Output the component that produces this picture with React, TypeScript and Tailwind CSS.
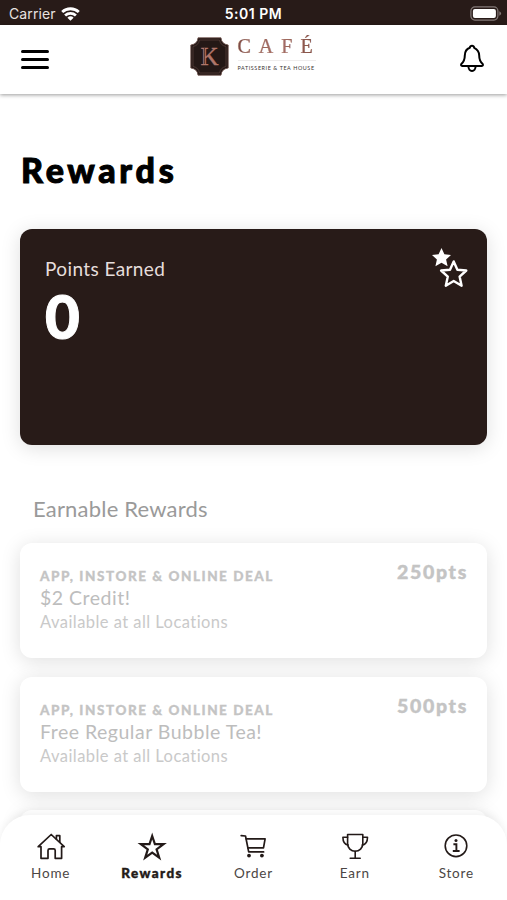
import React from "react"

type Reward = {
  id: string
  kind: string
  title: string
  location: string
  points: string
}

const rewards: Reward[] = [
  {
    id: "credit",
    kind: "APP, INSTORE & ONLINE DEAL",
    title: "$2 Credit!",
    location: "Available at all Locations",
    points: "250pts",
  },
  {
    id: "bubble-tea",
    kind: "APP, INSTORE & ONLINE DEAL",
    title: "Free Regular Bubble Tea!",
    location: "Available at all Locations",
    points: "500pts",
  },
]

const navItems = [
  { id: "home", label: "Home", icon: HomeIcon },
  { id: "rewards", label: "Rewards", icon: StarIcon },
  { id: "order", label: "Order", icon: CartIcon },
  { id: "earn", label: "Earn", icon: TrophyIcon },
  { id: "store", label: "Store", icon: InfoIcon },
]

function HomeIcon() {
  return (
    <svg width="30" height="30" viewBox="0 0 30 30" fill="none" stroke="#231a18" strokeWidth="1.7" strokeLinejoin="round" strokeLinecap="round">
      <path d="M5 27.300V15.700H2.200L15.200 3.500l13 12.200h-2.600v11.600h-6.400v-7.800q0-1.600-1.600-1.600h-4q-1.600 0-1.600 1.600v7.800z" />
      <path d="M20.400 8V4.700h3.400v6.500" />
    </svg>
  )
}

function StarIcon() {
  return (
    <svg width="30" height="30" viewBox="0 0 30 30" fill="none" stroke="#231a18" strokeWidth="2.2" strokeLinejoin="miter">
      <path d="M15.200 5l2.700 8.100h8.700l-7 5.300 2.600 8.200-7-5-7 5 2.600-8.200-7-5.300h8.700z" />
    </svg>
  )
}

function CartIcon() {
  return (
    <svg width="30" height="30" viewBox="0 0 30 30" fill="none" stroke="#231a18" strokeWidth="1.7" strokeLinejoin="round" strokeLinecap="round">
      <path d="M3.200 4.600l4.300.4 3.200 15.900h14.900" />
      <path d="M8.200 7.800h18.900l-1.600 9H9.900" />
      <circle cx="11" cy="24.600" r="1.900" fill="#231a18" stroke="none" />
      <circle cx="23.900" cy="24.600" r="1.900" fill="#231a18" stroke="none" />
    </svg>
  )
}

function TrophyIcon() {
  return (
    <svg width="30" height="30" viewBox="0 0 30 30" fill="none" stroke="#231a18" strokeWidth="1.6" strokeLinejoin="round" strokeLinecap="round">
      <path d="M7.600 3.500h15.200v9.200a7.600 7.600 0 0 1-15.200 0z" />
      <path d="M7.600 6.300H2.900q0 6.800 5.200 7.800M22.800 6.300h4.700q0 6.800-5.200 7.800" />
      <path d="M15.200 20.400v6.600M10.200 27.200h10" />
    </svg>
  )
}

function InfoIcon() {
  return (
    <svg width="30" height="30" viewBox="0 0 30 30" fill="none" stroke="#231a18" strokeWidth="1.6">
      <circle cx="15" cy="14.800" r="10.800" />
      <circle cx="15" cy="9.600" r="1.500" fill="#231a18" stroke="none" />
      <path d="M12.400 13.200h3V20M11.800 20h6.800" strokeWidth="1.900" />
    </svg>
  )
}

function BellIcon() {
  return (
    <svg width="28" height="30" viewBox="0 0 28 30" fill="none" stroke="#000" strokeWidth="2" strokeLinejoin="round" strokeLinecap="round" className="-mt-[3px]">
      <path d="M14 2.800q-1.800 0-2.200 2C8.300 6 6.900 9 6.800 12.500q0 5.500-3.500 8.500-.8 1.800.9 1.900h19.600q1.700-.1.9-1.900-3.500-3-3.500-8.500-.1-5.500-5-7.700-.4-2-2.200-2z" />
      <path d="M10.400 23.200a3.600 4.800 0 0 0 7.200 0" />
    </svg>
  )
}

function StarsIcon() {
  return (
    <svg width="38" height="42" viewBox="0 0 38 42">
      <path d="M9.500 0l2.900 6.300 6.600.7-4.900 4.500 1.500 6.700-6.100-3.400-6.100 3.400 1.500-6.700L0 7l6.600-.7z" fill="#fff" />
      <path
        d="M21.700 13.400l3.700 8.300 8.900.8-6.700 6.100 2 9.100-7.900-4.700-7.900 4.700 2-9.100-6.700-6.100 8.900-.8z"
        fill="#281b18"
        stroke="#fff"
        strokeWidth="2.400"
        strokeLinejoin="round"
      />
    </svg>
  )
}

function StatusBar() {
  return (
    <div className="flex h-[25px] shrink-0 items-center bg-[#281b18] px-[9px] font-['Inter',sans-serif] text-white">
      <div className="flex flex-1 items-center gap-[5px] pt-[2px]">
        <span className="text-[14px] leading-5 tracking-[0.1px] text-[#e8e2e0]">Carrier</span>
        <svg width="19" height="14" viewBox="0 0 19 14" fill="none" stroke="#fff" strokeWidth="2.8">
          <path d="M1.200 5.100a12 12 0 0 1 16.600 0" />
          <path d="M4.100 8.500a8 8 0 0 1 10.800 0" />
          <path d="M9.500 13.700L6.400 10.700a4.500 4.500 0 0 1 6.200 0z" fill="#fff" stroke="none" />
        </svg>
      </div>
      <span className="pt-[2px] text-[14px] leading-5 font-semibold tracking-[0.5px]">5:01 PM</span>
      <div className="flex flex-1 justify-end pt-px">
        <svg width="32" height="15" viewBox="0 0 32 15" className="mr-[-4px]">
          <rect x=".9" y=".9" width="27" height="13.200" rx="4" fill="none" stroke="#837977" strokeWidth="1.200" />
          <rect x="2.900" y="2.900" width="23" height="9.200" rx="2" fill="#fff" />
          <path d="M29.300 5.200q1.800.7 1.800 2.300t-1.800 2.300z" fill="#837977" />
        </svg>
      </div>
    </div>
  )
}

function Logo() {
  return (
    <div className="-mt-[7px] -ml-[2px] flex items-center gap-[9px]">
      <svg width="39" height="39" viewBox="0 0 39 39">
        <path d="M8 .8h23q.5 6.200 7.200 7.200v23q-6.700 1-7.200 7.200H8Q7.500 32 .8 31V8Q7.500 7 8 .8z" fill="#241816" stroke="#6d4f49" strokeWidth=".8" />
        <path d="M9.500 3h20q1 5.500 6.500 6.500v20q-5.500 1-6.500 6.500h-20Q8.500 30.500 3 29.500v-20Q8.500 8.500 9.500 3z" fill="none" stroke="#5c443e" strokeWidth=".7" />
        <text x="19.500" y="27.500" textAnchor="middle" fontFamily="Liberation Serif, serif" fontSize="25" fill="#b0766a" stroke="#b0766a" strokeWidth=".4">K</text>
        <path d="M14.500 11v16" stroke="#3a211d" strokeWidth=".7" />
      </svg>
      <div className="-mt-[5px] flex w-[78px] flex-col">
        <span className="bg-gradient-to-r from-[#7c4a40] via-[#ad766b] to-[#7c4a40] bg-clip-text font-['Liberation_Serif',serif] text-[20px] leading-[22px] tracking-[8px] whitespace-nowrap text-transparent [-webkit-text-stroke:0.2px_#9a6458]">CAFÉ</span>
        <div className="mt-[3px] h-px w-full bg-[#eeecec]" />
        <span className="mt-[3px] font-['Lato',sans-serif] text-[5.400px] leading-[8px] tracking-[0.600px] whitespace-nowrap text-[#3a3433]">PATISSERIE &amp; TEA HOUSE</span>
      </div>
    </div>
  )
}

function Header() {
  return (
    <header className="relative z-10 flex h-[69px] shrink-0 items-center justify-between bg-white px-[21px] shadow-[0_1px_4px_rgba(0,0,0,0.4)]">
      <button className="flex w-[28px] flex-col gap-[5px]" aria-label="Menu">
        <span className="h-[3px] w-full rounded-full bg-black" />
        <span className="h-[3px] w-full rounded-full bg-black" />
        <span className="h-[3px] w-full rounded-full bg-black" />
      </button>
      <Logo />
      <button aria-label="Notifications">
        <BellIcon />
      </button>
    </header>
  )
}

function RewardCard({ reward }: { reward: Reward }) {
  return (
    <div className="flex h-[115px] shrink-0 justify-between rounded-xl bg-white px-5 shadow-[0_3px_20px_rgba(0,0,0,0.13)]">
      <div className="flex flex-col pt-6 whitespace-nowrap">
        <span className="text-[13.5px] leading-[18px] font-black tracking-[1.55px] text-[#c4c4c4] [-webkit-text-stroke:0.3px_#c4c4c4]">{reward.kind}</span>
        <span className="mt-px text-[19.5px] leading-6 tracking-[0.5px] text-[#bdbdbd]">{reward.title}</span>
        <span className="mt-px text-[16.5px] leading-[22px] tracking-[0.45px] text-[#c9c9c9]">{reward.location}</span>
      </div>
      <span className="-mr-px pt-[17px] text-[19.5px] leading-6 font-black tracking-[1.7px] text-[#c4c4c4] [-webkit-text-stroke:0.4px_#c4c4c4]">{reward.points}</span>
    </div>
  )
}

export default function App() {
  return (
    <div className="flex h-[900px] w-[507px] flex-col overflow-hidden bg-white font-['Lato',sans-serif]">
      <StatusBar />
      <Header />

      <main className="flex min-h-0 flex-1 flex-col overflow-hidden px-5 pt-[56px]">
        <h1 className="pl-px text-[34px] leading-10 font-black tracking-[3.7px] text-black [-webkit-text-stroke:1px_#000]">Rewards</h1>

        {/* Points balance */}
        <section className="mt-[39px] flex h-[216px] shrink-0 justify-between rounded-xl bg-[#281b18] pr-[17px] pl-[25px] text-white shadow-[0_3px_20px_rgba(0,0,0,0.13)]">
          <div className="flex flex-col pt-7">
            <span className="text-[19px] leading-6 tracking-[0.4px] text-[#e6dedc]">Points Earned</span>
            <span className="mt-[5px] text-[60px] leading-[60px] font-black [-webkit-text-stroke:1px_#fff]">0</span>
          </div>
          <div className="pt-[19px]">
            <StarsIcon />
          </div>
        </section>

        <h2 className="mt-[50px] pl-[13px] text-[22px] leading-7 tracking-[0.2px] text-[#9a9a9a]">Earnable Rewards</h2>
        <div className="mt-5 flex flex-col gap-[19px]">
          {rewards.map((reward) => (
            <RewardCard key={reward.id} reward={reward} />
          ))}
          <div className="-mt-px h-[115px] shrink-0 rounded-xl bg-white shadow-[0_3px_20px_rgba(0,0,0,0.13)]" />
        </div>
      </main>

      {/* Bottom tabs, pulled up so the list shows behind the rounded corners */}
      <nav className="relative z-10 -mt-[30px] grid h-[85px] shrink-0 grid-cols-5 rounded-t-[30px] bg-white pt-4 shadow-[0_-2px_8px_rgba(0,0,0,0.06)]">
        {navItems.map(({ id, label, icon: Icon }) => (
          <button key={id} className="flex flex-col items-center">
            <Icon />
            <span
              className={`mt-[3px] text-[13.5px] leading-[18px] ${
                id === "rewards"
                  ? "font-black tracking-[1.4px] text-[#231a18] [-webkit-text-stroke:0.4px_#231a18]"
                  : "tracking-[0.8px] text-[#4b4644]"
              }`}
            >
              {label}
            </span>
          </button>
        ))}
      </nav>
    </div>
  )
}
